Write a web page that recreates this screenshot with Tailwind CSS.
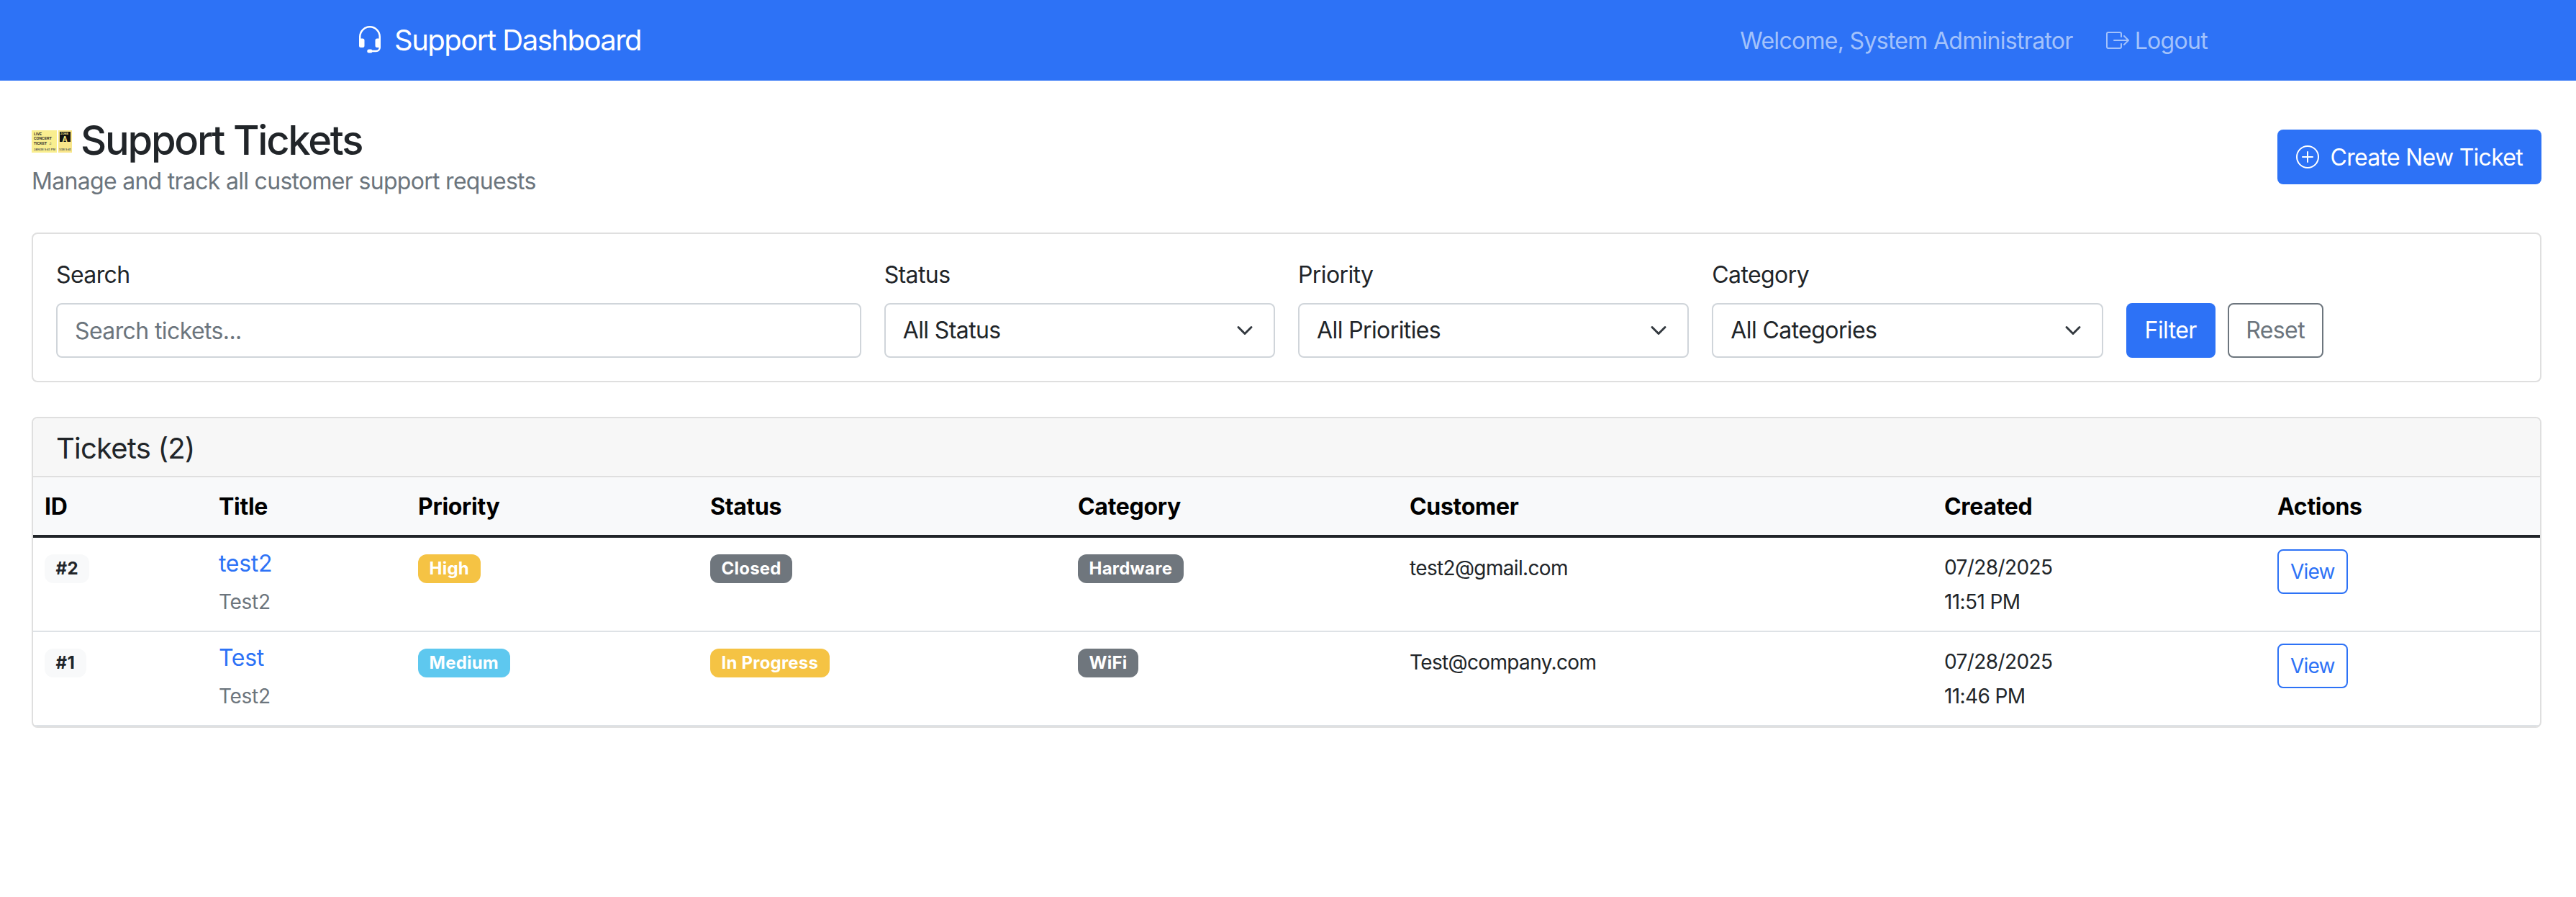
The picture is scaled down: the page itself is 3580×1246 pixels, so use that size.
<!DOCTYPE html>
<html lang="en">
<head>
<meta charset="utf-8">
<title>Support Tickets</title>
<script src="https://cdn.jsdelivr.net/npm/@tailwindcss/browser@4"></script>
</head>
<body class="bg-white font-['Inter',sans-serif] text-[32px] leading-[48px] text-[#212529] min-h-screen">
<nav class="h-[112px] bg-[#2d72f6]">
  <div class="mx-auto h-full max-w-[2640px] px-[24px] flex items-center justify-between">
    <a class="flex items-center gap-[14px] text-[40px] leading-[48px] text-white tracking-[-1.5px]">
      <svg class="w-[40px] h-[40px]" viewBox="0 0 16 16" fill="currentColor"><path d="M8 1a5 5 0 0 0-5 5v1h1a1 1 0 0 1 1 1v3a1 1 0 0 1-1 1H3a1 1 0 0 1-1-1V6a6 6 0 1 1 12 0v6a2.5 2.5 0 0 1-2.5 2.5H9.366a1 1 0 0 1-.866.5h-1a1 1 0 1 1 0-2h1a1 1 0 0 1 .866.5H11.5A1.5 1.5 0 0 0 13 12h-1a1 1 0 0 1-1-1V8a1 1 0 0 1 1-1h1V6a5 5 0 0 0-5-5z"/></svg>
      <span>Support Dashboard</span>
    </a>
    <div class="flex items-center gap-[46px] pr-[18px] text-[#a3c2fb] tracking-[-0.7px]">
      <span class="h-[48px] leading-[50px]">Welcome, System Administrator</span>
      <a class="flex items-center gap-[8px]">
        <svg class="w-[32px] h-[32px]" viewBox="0 0 16 16" fill="currentColor"><path fill-rule="evenodd" d="M10 12.5a.5.5 0 0 1-.5.5h-8a.5.5 0 0 1-.5-.5v-9a.5.5 0 0 1 .5-.5h8a.5.5 0 0 1 .5.5v2a.5.5 0 0 0 1 0v-2A1.5 1.5 0 0 0 9.5 2h-8A1.5 1.5 0 0 0 0 3.5v9A1.5 1.5 0 0 0 1.5 14h8a1.5 1.5 0 0 0 1.5-1.5v-2a.5.5 0 0 0-1 0v2z"/><path fill-rule="evenodd" d="M15.854 8.354a.5.5 0 0 0 0-.708l-3-3a.5.5 0 0 0-.708.708L14.293 7.5H5.5a.5.5 0 0 0 0 1h8.793l-2.147 2.146a.5.5 0 0 0 .708.708l3-3z"/></svg>
        <span class="h-[48px] leading-[50px]">Logout</span>
      </a>
    </div>
  </div>
</nav>

<main class="pl-[44px] pr-[48px] pt-[48px]">
  <header class="flex items-center justify-between mb-[48px]">
    <div>
      <h1 class="flex items-center gap-[12px] h-[67px] text-[56px] leading-[67px] font-medium tracking-[-2.2px]">
        <svg class="w-[56px] h-[32px] mt-[6px] shrink-0" viewBox="0 0 56 32" font-family="Liberation Sans" font-weight="700" letter-spacing="0">
          <rect x="0" y="0" width="35" height="31" fill="#f9ee8f"/>
          <rect x="37" y="0" width="19" height="31" fill="#f9e68a"/>
          <rect x="39" y="2" width="15" height="14" fill="#111"/>
          <text x="3" y="7" font-size="5" fill="#222">LIVE</text>
          <text x="3" y="13" font-size="5" fill="#222">CONCERT</text>
          <text x="3" y="19.5" font-size="5" fill="#222">TICKET</text>
          <text x="24" y="19.5" font-size="5" fill="#222">♫</text>
          <text x="3" y="28" font-size="4" fill="#555">JAN/28 9:41 PM</text>
          <text x="38" y="28" font-size="4" fill="#555">1/28 9:41</text>
          <text x="40" y="6" font-size="4" fill="#f9ee8f">ZONE</text>
          <text x="42.5" y="15.5" font-size="10" fill="#f9ee8f">A</text>
        </svg>
        <span class="h-[67px] leading-[70px]">Support Tickets</span>
      </h1>
      <p class="h-[48px] leading-[50px] text-[#6c757d] tracking-[-0.7px]">Manage and track all customer support requests</p>
    </div>
    <button class="h-[76px] px-[26px] rounded-[8px] bg-[#2d72f6] text-white flex items-center gap-[16px] tracking-[-0.72px]">
      <svg class="w-[32px] h-[32px]" viewBox="0 0 16 16" fill="currentColor"><path d="M8 15A7 7 0 1 1 8 1a7 7 0 0 1 0 14zm0 1A8 8 0 1 0 8 0a8 8 0 0 0 0 16z"/><path d="M8 4a.5.5 0 0 1 .5.5v3h3a.5.5 0 0 1 0 1h-3v3a.5.5 0 0 1-1 0v-3h-3a.5.5 0 0 1 0-1h3v-3A.5.5 0 0 1 8 4z"/></svg>
      <span class="h-[48px] leading-[50px]">Create New Ticket</span>
    </button>
  </header>

  <section class="border-2 border-[#dfdfdf] rounded-[8px] p-[32px] mb-[48px]">
    <div class="grid grid-cols-12 gap-[32px] tracking-[-0.6px]">
      <div class="col-span-4">
        <label class="block h-[48px] leading-[50px] mb-[16px]">Search</label>
        <input class="block w-full h-[76px] px-[24px] border-2 border-[#d0d5da] rounded-[8px] placeholder:text-[#6c757d] outline-none" placeholder="Search tickets...">
      </div>
      <div class="col-span-2">
        <label class="block h-[48px] leading-[50px] mb-[16px]">Status</label>
        <div class="flex items-center justify-between h-[76px] pl-[24px] pr-[24px] border-2 border-[#d0d5da] rounded-[8px]">
          <span>All Status</span>
          <svg class="w-[32px] h-[24px]" viewBox="0 0 16 16" fill="none" stroke="#343a40" stroke-width="2" stroke-linecap="round" stroke-linejoin="round"><path d="m2 5 6 6 6-6"/></svg>
        </div>
      </div>
      <div class="col-span-2">
        <label class="block h-[48px] leading-[50px] mb-[16px]">Priority</label>
        <div class="flex items-center justify-between h-[76px] pl-[24px] pr-[24px] border-2 border-[#d0d5da] rounded-[8px]">
          <span>All Priorities</span>
          <svg class="w-[32px] h-[24px]" viewBox="0 0 16 16" fill="none" stroke="#343a40" stroke-width="2" stroke-linecap="round" stroke-linejoin="round"><path d="m2 5 6 6 6-6"/></svg>
        </div>
      </div>
      <div class="col-span-2">
        <label class="block h-[48px] leading-[50px] mb-[16px]">Category</label>
        <div class="flex items-center justify-between h-[76px] pl-[24px] pr-[24px] border-2 border-[#d0d5da] rounded-[8px]">
          <span>All Categories</span>
          <svg class="w-[32px] h-[24px]" viewBox="0 0 16 16" fill="none" stroke="#343a40" stroke-width="2" stroke-linecap="round" stroke-linejoin="round"><path d="m2 5 6 6 6-6"/></svg>
        </div>
      </div>
      <div class="col-span-2 flex items-end gap-[17px]">
        <button class="h-[76px] w-[124px] rounded-[8px] bg-[#2d72f6] text-white">Filter</button>
        <button class="h-[76px] w-[133px] rounded-[8px] border-2 border-[#6c757d] text-[#6c757d]">Reset</button>
      </div>
    </div>
  </section>

  <section class="border-2 border-[#dfdfdf] rounded-[8px] overflow-hidden">
    <div class="h-[82px] px-[32px] flex items-center bg-[#f7f7f7] border-b-2 border-[#dfdfdf]">
      <h2 class="h-[48px] text-[40px] leading-[52px] font-normal tracking-[-0.8px]">Tickets (2)</h2>
    </div>
    <table class="w-full table-fixed border-separate border-spacing-0 tracking-[-0.3px]">
      <colgroup>
        <col class="w-[242px]"><col class="w-[277px]"><col class="w-[406px]"><col class="w-[511px]"><col class="w-[461px]"><col class="w-[743px]"><col class="w-[463px]"><col>
      </colgroup>
      <thead class="bg-[#f8f9fa] text-black">
        <tr class="text-left">
          <th class="h-[84px] px-[16px] pt-[2px] font-bold border-b-4 border-[#212529]">ID</th>
          <th class="h-[84px] px-[16px] pt-[2px] font-bold border-b-4 border-[#212529]">Title</th>
          <th class="h-[84px] px-[16px] pt-[2px] font-bold border-b-4 border-[#212529]">Priority</th>
          <th class="h-[84px] px-[16px] pt-[2px] font-bold border-b-4 border-[#212529]">Status</th>
          <th class="h-[84px] px-[16px] pt-[2px] font-bold border-b-4 border-[#212529]">Category</th>
          <th class="h-[84px] px-[16px] pt-[2px] font-bold border-b-4 border-[#212529]">Customer</th>
          <th class="h-[84px] px-[16px] pt-[2px] font-bold border-b-4 border-[#212529]">Created</th>
          <th class="h-[84px] px-[16px] pt-[2px] font-bold border-b-4 border-[#212529]">Actions</th>
        </tr>
      </thead>
      <tbody>
        <tr>
          <td class="p-[16px] align-top border-b-2 border-[#dee2e6]"><span class="inline-block px-[15.6px] py-[8.4px] rounded-[12px] bg-[#f8f9fa] text-[24px] leading-[24px] font-bold tracking-[0.3px]">#2</span></td>
          <td class="p-[16px] align-top border-b-2 border-[#dee2e6]"><a class="block leading-[40px] mb-[8px] text-[#2d72f6]">test2</a><span class="block h-[48px] leading-[50px] text-[28px] text-[#6c757d]">Test2</span></td>
          <td class="p-[16px] align-top border-b-2 border-[#dee2e6]"><span class="inline-block px-[15.6px] py-[8.4px] rounded-[12px] bg-[#f5c344] text-white text-[24px] leading-[24px] font-bold tracking-[0.2px]">High</span></td>
          <td class="p-[16px] align-top border-b-2 border-[#dee2e6]"><span class="inline-block px-[15.6px] py-[8.4px] rounded-[12px] bg-[#6f767d] text-white text-[24px] leading-[24px] font-bold tracking-[0.2px]">Closed</span></td>
          <td class="p-[16px] align-top border-b-2 border-[#dee2e6]"><span class="inline-block px-[15.6px] py-[8.4px] rounded-[12px] bg-[#6f767d] text-white text-[24px] leading-[24px] font-bold tracking-[0.2px]">Hardware</span></td>
          <td class="p-[16px] pt-[18px] align-top border-b-2 border-[#dee2e6] text-[28px] tracking-[-0.65px]">test2@gmail.com</td>
          <td class="p-[16px] pt-[17px] align-top border-b-2 border-[#dee2e6] text-[28px] tracking-[-0.6px]">07/28/2025<br>11:51 PM</td>
          <td class="p-[16px] align-top border-b-2 border-[#dee2e6]"><button class="block h-[62px] px-[16px] text-[28px] leading-[42px] tracking-[-0.8px] rounded-[8px] border-2 border-[#2d72f6] text-[#2d72f6]">View</button></td>
        </tr>
        <tr>
          <td class="p-[16px] align-top border-b-2 border-[#dee2e6]"><span class="inline-block px-[15.6px] py-[8.4px] rounded-[12px] bg-[#f8f9fa] text-[24px] leading-[24px] font-bold tracking-[0.3px]">#1</span></td>
          <td class="p-[16px] align-top border-b-2 border-[#dee2e6]"><a class="block leading-[40px] mb-[8px] text-[#2d72f6]">Test</a><span class="block h-[48px] leading-[50px] text-[28px] text-[#6c757d]">Test2</span></td>
          <td class="p-[16px] align-top border-b-2 border-[#dee2e6]"><span class="inline-block px-[15.6px] py-[8.4px] rounded-[12px] bg-[#5ec8ef] text-white text-[24px] leading-[24px] font-bold tracking-[0.2px]">Medium</span></td>
          <td class="p-[16px] align-top border-b-2 border-[#dee2e6]"><span class="inline-block px-[15.6px] py-[8.4px] rounded-[12px] bg-[#f5c344] text-white text-[24px] leading-[24px] font-bold tracking-[0.2px]">In Progress</span></td>
          <td class="p-[16px] align-top border-b-2 border-[#dee2e6]"><span class="inline-block px-[15.6px] py-[8.4px] rounded-[12px] bg-[#6f767d] text-white text-[24px] leading-[24px] font-bold tracking-[0.2px]">WiFi</span></td>
          <td class="p-[16px] pt-[18px] align-top border-b-2 border-[#dee2e6] text-[28px] tracking-[-0.65px]">Test@company.com</td>
          <td class="p-[16px] pt-[17px] align-top border-b-2 border-[#dee2e6] text-[28px] tracking-[-0.6px]">07/28/2025<br>11:46 PM</td>
          <td class="p-[16px] align-top border-b-2 border-[#dee2e6]"><button class="block h-[62px] px-[16px] text-[28px] leading-[42px] tracking-[-0.8px] rounded-[8px] border-2 border-[#2d72f6] text-[#2d72f6]">View</button></td>
        </tr>
      </tbody>
    </table>
  </section>
</main>
</body>
</html>
